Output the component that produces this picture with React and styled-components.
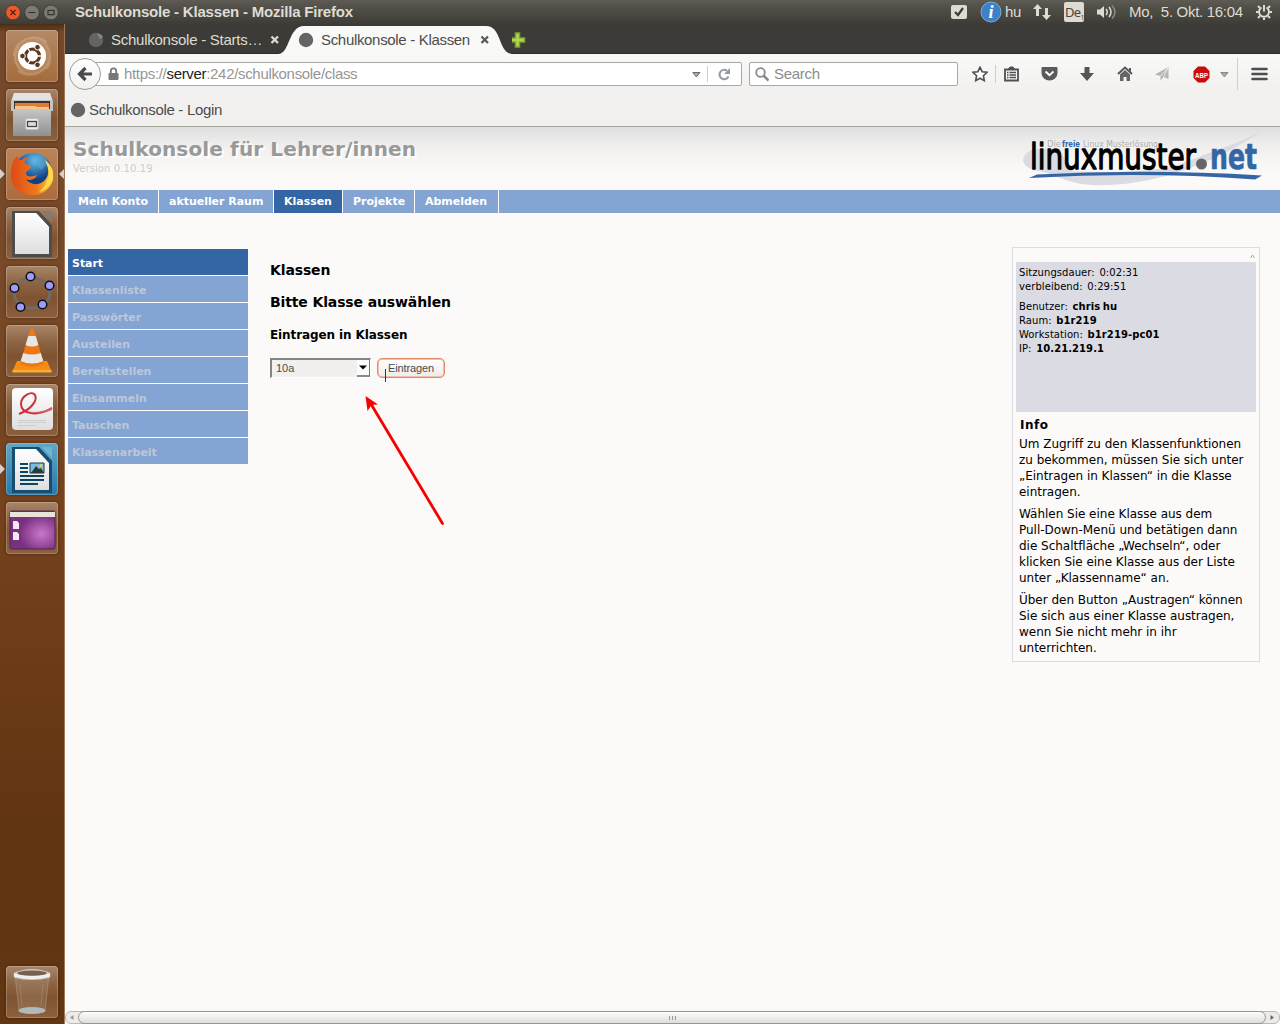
import React from 'react';
import styled, { createGlobalStyle, css } from 'styled-components';

const Global = createGlobalStyle`
  * { box-sizing: border-box; }
  html, body { margin: 0; padding: 0; overflow: hidden; }
  body { font-family: "Liberation Sans", Arial, sans-serif; }
  svg { display: block; flex: none; }
`;

const Desktop = styled.div`
  width: 1280px;
  height: 1024px;
  display: grid;
  grid-template: 24px 1000px / 65px 1215px;
  background: #fbfaf9;
  overflow: hidden;
`;

/* ---------- top panel ---------- */
const Panel = styled.header`
  grid-column: 1 / 3;
  display: flex;
  align-items: center;
  background: linear-gradient(#5d5b53 0, #504f47 35%, #3d3c37 100%);
  color: #dfdbd2;
`;
const WindowButtons = styled.div`
  display: flex;
  gap: 3px;
  padding-left: 5px;
  width: 75px;
`;
const PanelTitle = styled.div`
  font: bold 15px/24px "Liberation Sans", Arial, sans-serif;
  letter-spacing: -0.2px;
  flex: 1;
  white-space: pre;
`;
const Indicators = styled.div`
  display: flex;
  align-items: center;
  height: 24px;
  width: 330px;
  font-size: 15px;
`;
const Indicator = styled.div`
  width: ${p => p.$w}px;
  display: flex;
  align-items: center;
  flex: none;
  white-space: pre;
`;
const Keyboard = styled.div`
  width: 20px;
  height: 20px;
  border-radius: 2px;
  background: #dfdbd2;
  color: #45443e;
  font: 13px/20px "Noto Sans", sans-serif;
  display: flex;
  align-items: center;
  padding-left: 1px;
  letter-spacing: -0.7px;
  sub { font-size: 7px; line-height: 8px; align-self: flex-end; }
`;
const Clock = styled.span`
  letter-spacing: -0.3px;
  position: relative;
  top: -1px;
`;

/* ---------- launcher ---------- */
const Launcher = styled.nav`
  display: flex;
  flex-direction: column;
  gap: 7px;
  padding: 6px 0 6px 0;
  background: linear-gradient(#4a2d16 0, #75482a 8px, #784a29 250px, #75421d 480px, #6d3c18 620px, #623512 800px, #633613 100%);
  border-right: 1px solid #9d785b;
`;
const LauncherItem = styled.div`
  width: 64px;
  height: 52px;
  display: grid;
  grid-template-columns: 6px 52px 6px;
  align-items: center;
  ${p => p.$last && css`margin-top: auto;`}
`;
const Tile = styled.div`
  width: 52px;
  height: 52px;
  border-radius: 4px;
  background: ${p => p.$bg || 'linear-gradient(#a98568 0, #8f6746 30%, #7f5331 60%, #8a603d 100%)'};
  box-shadow: inset 0 0 0 1px rgba(255,255,255,.22), 0 0 3px rgba(40,15,0,.55);
`;

/* ---------- browser ---------- */
const Browser = styled.main`
  display: grid;
  grid-template-rows: 30px 73px 884px 13px;
  width: 1215px;
`;
const TabStrip = styled.div`
  display: flex;
  background: #3c3b37;
  box-shadow: inset 0 -1px #2d2c28;
`;
const IdleTab = styled.div`
  width: 213px;
  padding-left: 23px;
  display: flex;
  align-items: center;
  height: 32px;
  color: #dfdbd2;
  font-size: 15px;
  white-space: pre;
`;
const ActiveTab = styled.div`
  position: relative;
  width: 234px;
  height: 30px;
  display: flex;
  align-items: center;
  padding: 2px 0 0 20px;
  color: #4c4c4c;
  font-size: 15px;
  white-space: pre;
`;
const TabShape = styled.svg`
  position: absolute;
  left: 0;
  top: 0;
`;
const TabLabel = styled.span`
  position: relative;
  display: block;
  flex: none;
  width: ${p => p.$w}px;
  margin-left: 7px;
  margin-top: -1px;
  letter-spacing: ${p => p.$ls || 0}px;
`;
const Layered = styled.span`
  position: relative;
  display: block;
`;
const NewTab = styled.div`
  height: 30px;
`;
const Chrome = styled.div`
  background: linear-gradient(#f9f9f8 0, #f2f1f0 35px, #f1f0ef 100%);
  border-bottom: 1px solid #a8a79e;
`;
const NavBar = styled.div`
  height: 40px;
  display: flex;
  align-items: center;
  padding-left: 4px;
`;
const BackButton = styled.div`
  width: 32px;
  height: 32px;
  border-radius: 50%;
  border: 1px solid #9b9b97;
  background: linear-gradient(#fff, #f2f1f0);
  display: grid;
  place-items: center;
  position: relative;
  z-index: 1;
`;
const UrlBar = styled.div`
  width: 650px;
  margin-left: -9px;
  height: 24px;
  border: 1px solid #a9a89f;
  border-radius: 0 2px 2px 0;
  background: #fff;
  display: flex;
  align-items: center;
  padding-left: 15px;
  color: #969696;
  font-size: 15px;
`;
const Url = styled.div`
  flex: 1;
  margin-left: 5px;
  letter-spacing: -0.32px;
  line-height: 22px;
  b { font-weight: normal; color: #222; }
`;
const Rule = styled.i`
  width: 1px;
  height: ${p => p.$h}px;
  background: #cfcecb;
  margin: ${p => p.$m};
`;
const SearchBox = styled.div`
  width: 209px;
  height: 24px;
  margin-left: 7px;
  border: 1px solid #a9a89f;
  border-radius: 2px;
  background: #fff;
  display: flex;
  align-items: center;
  gap: 5px;
  padding-left: 5px;
  color: #8c8c8c;
  font-size: 15px;
  line-height: 22px;
  letter-spacing: -0.3px;
`;
const Tool = styled.div`
  margin-left: ${p => p.$gap}px;
`;
const Bookmarks = styled.div`
  height: 31px;
  display: flex;
  align-items: center;
  padding-left: 5px;
  color: #4c4c4c;
  font-size: 15px;
  gap: 3px;
  letter-spacing: -0.31px;
`;

/* ---------- page ---------- */
const Page = styled.section`
  font-family: "DejaVu Sans", Verdana, sans-serif;
  background: linear-gradient(#dedede 0, #ededec 16px, #f7f6f5 34px, #fbfaf9 50px);
  padding-left: 3px;
  overflow: hidden;
`;
const PageHead = styled.div`
  height: 63px;
  display: flex;
  justify-content: space-between;
  padding: 0 17px 0 5px;
`;
const PageTitle = styled.h1`
  margin: 10px 0 0;
  font-size: 20px;
  line-height: 25px;
  letter-spacing: 0.13px;
  color: #999;
  text-shadow: 2px 2px 1px #fff;
`;
const Version = styled.div`
  font-size: 10px;
  line-height: 14px;
  letter-spacing: 0.1px;
  color: #ccc;
`;
const MainNav = styled.div`
  display: flex;
  height: 23px;
  background: #84a5d3;
`;
const NavItem = styled.a`
  padding: 1px 0 0 10px;
  width: ${p => p.$w}px;
  border-right: 1px solid #fff;
  background: ${p => (p.$on ? '#3465a4' : 'transparent')};
  color: #fff;
  font-weight: bold;
  font-size: 11px;
  line-height: 22px;
  letter-spacing: -0.03px;
  white-space: nowrap;
`;
const Columns = styled.div`
  display: grid;
  grid-template-columns: 180px 764px 248px;
  align-items: start;
`;
const SideMenu = styled.div`
  margin-top: 36px;
  display: grid;
  gap: 1px;
  background: #fff;
`;
const SideItem = styled.a`
  height: 26px;
  padding: 1px 0 0 4px;
  font-weight: bold;
  font-size: 11px;
  line-height: 27px;
  letter-spacing: -0.04px;
  background: ${p => (p.$on ? '#3465a4' : '#84a5d3')};
  color: ${p => (p.$on ? '#fff' : '#bcc8da')};
`;
const Content = styled.div`
  padding: 47px 0 0 22px;
  color: #000;
`;
const Heading = styled.h2`
  margin: 0 0 12px;
  font-size: 14px;
  line-height: 20px;
  letter-spacing: -0.13px;
`;
const SubHeading = styled.h3`
  margin: 0 0 12px;
  padding-top: 1px;
  font-size: 12px;
  line-height: 20px;
  letter-spacing: -0.1px;
`;
const Form = styled.div`
  display: flex;
  gap: 6px;
  padding-top: 1px;
  font-family: "Liberation Sans", Arial, sans-serif;
  font-size: 11px;
  color: #4c4c4c;
`;
const Select = styled.div`
  width: 101px;
  height: 20px;
  border: 2px solid;
  border-color: #858585 #fff #fff #858585;
  border-right-width: 1px;
  border-bottom-width: 1px;
  background: #f1f0ef;
  display: flex;
  justify-content: space-between;
  padding-left: 4px;
  line-height: 17px;
`;
const SelectArrow = styled.div`
  width: 13px;
  height: 17px;
  background: #fcfcfc;
  border-right: 1px solid #777;
  border-bottom: 2px solid #8a8a8a;
  display: grid;
  place-items: center;
`;
const Submit = styled.div`
  position: relative;
  width: 68px;
  height: 20px;
  border: 1px solid #e38a68;
  border-radius: 5px;
  background: linear-gradient(#fff, #ececeb);
  box-shadow: inset 0 0 0 1px #f3bea8;
  text-align: center;
  line-height: 18px;
  letter-spacing: -0.1px;
`;
const Caret = styled.i`
  position: absolute;
  left: 7px;
  top: 10px;
  width: 1px;
  height: 13px;
  background: #333;
`;
const Pointer = styled.svg`
  margin: 14px 0 0 90px;
`;
const InfoBox = styled.aside`
  margin-top: 34px;
  height: 415px;
  border: 1px solid #dadbe3;
  padding: 0 3px;
`;
const Collapse = styled.div`
  height: 14px;
  display: flex;
  justify-content: flex-end;
  padding: 6px 1px 0 0;
`;
const Session = styled.div`
  height: 150px;
  padding: 4px 3px;
  background: #dadbe3;
  font-size: 10px;
  line-height: 14px;
  letter-spacing: 0.07px;
  word-spacing: 1.4px;
  p { margin: 0 0 6px; white-space: pre-line; }
  b { word-spacing: -1px; }
`;
const InfoTitle = styled.div`
  font-weight: bold;
  font-size: 12px;
  line-height: 16px;
  letter-spacing: 0.5px;
  padding: 5px 0 3px 4px;
`;
const InfoText = styled.p`
  margin: 0 0 6px 3px;
  font-size: 12px;
  line-height: 16px;
  letter-spacing: -0.02px;
  white-space: pre;
`;

/* ---------- scrollbar ---------- */
const Scrollbar = styled.div`
  display: flex;
  align-items: center;
  justify-content: space-between;
  background: #ecebea;
  border: 1px solid #bab9b5;
  border-radius: 6px;
  padding: 0 4px 0 3px;
`;
const Thumb = styled.div`
  width: 1188px;
  height: 13px;
  border: 1px solid #96958f;
  border-radius: 7px;
  background: linear-gradient(#fdfdfd, #dedddb);
  display: flex;
  align-items: center;
  justify-content: center;
  gap: 2px;
  i { width: 1px; height: 4px; background: #999; }
`;

const Favicon = ({ dim }) => (
  <svg width="16" height="16"><circle cx="8" cy="8" r="7.2" fill="#646464" />{dim && <path d="M9 1.5A7 7 0 0 1 15 5L12 7Z" fill="#8a8a88" />}</svg>
);
const Cross = ({ c }) => (
  <svg width="10" height="10"><path d="M1.5 1.5L8 8M8 1.5L1.5 8" stroke={c} strokeWidth="2.3" /></svg>
);
const Down = ({ c = '#6b6b6b' }) => (
  <svg width="9" height="8"><path d="M.8 2.500H8L4.400 7z" fill="#aaa" stroke={c} /></svg>
);
const WinButton = ({ kind }) => (
  <svg width="16" height="17" viewBox="0 0 16 17">
    <circle cx="8" cy="8.5" r="7.4" fill={kind === 'close' ? '#ec5a2c' : '#7c7a72'} stroke="#373530" strokeWidth=".8" />
    {kind === 'close' && <path d="M5.5 6l5 5m0-5l-5 5" stroke="#4a2312" strokeWidth="1.3" />}
    {kind === 'min' && <path d="M4.5 8.5h7" stroke="#35342f" strokeWidth="1.2" />}
    {kind === 'max' && <path d="M5 6.3h6v4.4H5z" fill="none" stroke="#35342f" strokeWidth="1.2" />}
  </svg>
);

/* Launcher artwork, each on a 52px grid */
const Art = {
  ubuntu: (
    <g>
      <path d="M8 26C8 10 28 2 41 12M44 25c0 16-18 25-32 16M25 8c16-2 24 18 16 31M27 44C12 46 4 28 13 16" fill="none" stroke="#e0c3a4" strokeOpacity=".35" strokeWidth="2" />
      <circle cx="26" cy="26" r="18" fill="#c69c76" opacity=".45" />
      <circle cx="26" cy="26" r="14" fill="#fff" />
      <circle cx="26.500" cy="26" r="7" fill="none" stroke="#59361d" strokeWidth="3.200" />
      <path d="M26.500 26L37 26M26.500 26L21 17M26.500 26L21 35" stroke="#fff" strokeWidth="1.400" />
      <g fill="#59361d" stroke="#fff" strokeWidth="1"><circle cx="16.500" cy="26" r="2.800" /><circle cx="31.500" cy="17.200" r="2.800" /><circle cx="31.500" cy="34.800" r="2.800" /></g>
    </g>
  ),
  files: (
    <g>
      <path d="M8 4h36l3 8v10H5V12z" fill="#c4c4c3" /><path d="M8 4h36l2 7H6z" fill="#e2e2e2" />
      <path d="M8 12h36v10H8z" fill="#423127" />
      <path d="M9 14h34v8H9z" fill="#e07a35" /><path d="M9 17h20l2 1h12v4H9z" fill="#f6c58c" />
      <path d="M7 20h38v27H7z" fill="url(#steel)" />
      <rect x="19.500" y="29.500" width="13" height="11" rx="2" fill="#eee" stroke="#bbb" />
      <rect x="21.500" y="32.500" width="9" height="5" fill="#ddd" stroke="#444" strokeWidth="1.300" />
    </g>
  ),
  firefox: (
    <g>
      <circle cx="27" cy="24" r="19" fill="url(#globe)" />
      <path d="M28 8c7-3 14 2 14 8-4 1-4 6-8 5-1-4-7-4-6-13z" fill="#5ea9d8" opacity=".5" />
      <path d="M7 14c1-3 3-5 5-6 0 3 2 4 3 4 3-2 5-2 7-2-3 2-4 4-3 6 3 1 6 1 6 3-1 3-5 3-5 7 2 4 7 2 11 1-2 5-8 6-11 4 5 8 19 7 22-5 1-5 0-8-2-12 6 5 8 12 7 18-3 10-12 16-22 15C12 46 4 37 5 25c0-4 1-8 2-11z" fill="url(#fox)" />
      <path d="M39 12c8 6 10 14 6 22-2 5-7 9-12 10 5-4 8-8 8-13 1 0 1 1 1 2 2-8 0-14-3-21z" fill="#ffdb4a" />
    </g>
  ),
  office: (
    <g>
      <path d="M6 4H33L46 18V50H6z" fill="#4d4d4d" /><path d="M36 4h10v12z" fill="#847a71" />
      <path d="M9 6H30L43 20V47H9z" fill="url(#paper)" /><path d="M30 6l13 14-8-4z" fill="#fff" />
    </g>
  ),
  geogebra: (
    <g>
      <ellipse cx="26" cy="27" rx="18" ry="15" fill="none" stroke="#6f6b67" strokeWidth="3" />
      {[[24.500, 10.500], [8.500, 22], [43.500, 19.500], [14.500, 41], [36.500, 38.500]].map(([x, y]) => <circle key={x} cx={x} cy={y} r="4.300" fill="#9c9cff" stroke="#101010" strokeWidth="1.500" />)}
    </g>
  ),
  vlc: (
    <g>
      <path d="M11 36h30l4.500 10H6.500z" fill="#f68b16" /><path d="M6.500 45h39v2.500h-39z" fill="#fcac2e" />
      <path d="M24 5q2-2 4 0l10 34q-12 6-24 0z" fill="#ee7913" />
      <path d="M22.300 11h7.400l2.700 9q-6.400 3-12.800 0z" fill="#e7e7e6" /><path d="M17.300 28q8.700 3 17.400 0l2.600 8q-11.300 5-22.600 0z" fill="#e7e7e6" />
    </g>
  ),
  reader: (
    <g>
      <rect x="6" y="4" width="41" height="42" rx="4" fill="url(#paper)" />
      <path d="M13 30C24 26 32 17 29 11 26 6 15 12 15 20c0 10 16 13 31 4" fill="none" stroke="#cf2e3e" strokeWidth="2" />
      <path d="M22 27q12 3 24-4v3q-12 6-24 1z" fill="#dd5963" />
      <path d="M12 36.500h28M12 38.500h28M12 41.500h18" stroke="#ccc" strokeWidth="1" />
    </g>
  ),
  writer: (
    <g>
      <path d="M6 4H33L46 18V50H6z" fill="#164e72" /><path d="M36 4h10v12z" fill="#6fb3d4" />
      <path d="M9 6H30L43 20V47H9z" fill="url(#paper)" />
      <path d="M14 21h8M14 25h8M14 29h8M14 33h24M14 37h24M14 41h18" stroke="#0b4562" strokeWidth="2" />
      <path d="M24 20h14v10H24z" fill="#7cbce0" stroke="#183949" /><path d="M25 30l5-7 3 3 2-1 3 5z" fill="#293c3a" /><circle cx="35" cy="22.500" r="1.500" fill="#f6c74d" />
    </g>
  ),
  desktop: (
    <g>
      <rect x="4" y="9" width="45" height="38" rx="2" fill="url(#purple)" stroke="#502455" />
      <path d="M4 10h45v5H4z" fill="#e9e4d9" />
      <path d="M7 19h4l2 2v6H7zM7 30h4l2 2v6H7z" fill="#f3e9f4" />
    </g>
  ),
  trash: (
    <g>
      <path d="M9 9l4 36q13 5 26 0l4-36z" fill="#ddd4cc" fillOpacity=".14" stroke="#c9b9aa" strokeOpacity=".35" />
      <path d="M7.500 7q18.500-8 37 0l-1 5q-17.500 4-35 0z" fill="#c9c9c6" />
      <path d="M8 9q18 5 36 0" fill="none" stroke="#f0f0ee" strokeWidth="3" />
      <ellipse cx="26" cy="7.200" rx="14.500" ry="2.600" fill="#77604e" />
      <ellipse cx="26" cy="44.500" rx="13.500" ry="3.500" fill="#b3b8b8" />
      <path d="M14 18l2 22M37 18l-2 22" stroke="#eee" strokeOpacity=".15" />
    </g>
  ),
};

const LAUNCHER = [
  { id: 'ubuntu', bg: 'linear-gradient(#b38a67,#a56c3d)' },
  { id: 'files' },
  { id: 'firefox', left: true, right: true, bg: 'linear-gradient(#bd8357,#ad6b3c)' },
  { id: 'office' },
  { id: 'geogebra' },
  { id: 'vlc' },
  { id: 'reader' },
  { id: 'writer', left: true, bg: 'linear-gradient(#62a5c6,#267baa)' },
  { id: 'desktop' },
  { id: 'trash', last: true },
];

const HiddenDefs = styled.div`
  height: 0;
  overflow: hidden;
  position: absolute;
`;
const Defs = () => (
  <HiddenDefs>
    <svg width="0" height="0">
      <defs>
        <linearGradient id="steel" x2="0" y2="1"><stop stopColor="#c6c6c6" /><stop offset="1" stopColor="#909090" /></linearGradient>
        <linearGradient id="paper" x2="0" y2="1"><stop stopColor="#fff" /><stop offset="1" stopColor="#dedede" /></linearGradient>
        <radialGradient id="globe" cx=".55" cy=".2"><stop stopColor="#62c2eb" /><stop offset="1" stopColor="#143f82" /></radialGradient>
        <linearGradient id="fox"><stop stopColor="#dd4a18" /><stop offset=".6" stopColor="#ef781b" /><stop offset="1" stopColor="#ffd43b" /></linearGradient>
        <radialGradient id="purple" cx=".7" cy=".6"><stop stopColor="#ca78cb" /><stop offset="1" stopColor="#79307f" /></radialGradient>
      </defs>
    </svg>
  </HiddenDefs>
);

const LogoArt = styled.svg`
  overflow: visible;
`;
const Logo = () => (
  <LogoArt width="242" height="60" viewBox="1021 127 242 60">
    <path d="M1034 149C1020 154 1018 167 1038 171C1054 173 1063 183 1092 185C1135 187 1200 174 1263 130C1238 144 1205 154 1180 164C1160 171 1120 174 1070 171L1060 149Z" fill="#dadbe3" />
    <g fontFamily="DejaVu Sans" fontSize="8">
      <text x="1047" y="147" textLength="14" lengthAdjust="spacingAndGlyphs" fill="#b0b0b0">Die</text>
      <text x="1062" y="147" textLength="18" lengthAdjust="spacingAndGlyphs" fontWeight="bold" fill="#3465a4">freie</text>
      <text x="1083" y="147" textLength="75" lengthAdjust="spacingAndGlyphs" fill="#b0b0b0">Linux Musterlösung</text>
    </g>
    <text x="1030" y="168.700" textLength="166" lengthAdjust="spacingAndGlyphs" fontFamily="DejaVu Sans" fontSize="35" fill="#000" stroke="#000" strokeWidth="1.300" strokeLinejoin="round">linuxmuster</text>
    <circle cx="1201.500" cy="164" r="5.500" fill="#666" />
    <text x="1210" y="168.700" textLength="47" lengthAdjust="spacingAndGlyphs" fontFamily="DejaVu Sans" fontWeight="bold" fontSize="35" fill="#3465a4" stroke="#3465a4" strokeWidth=".7" strokeLinejoin="round">net</text>
    <path d="M1029 178l8-3.500q110-6 225 1l-7 4q-110-8-226-1.500z" fill="#3465a4" />
  </LogoArt>
);

const NAV = [['Mein Konto', 91], ['aktueller Raum', 115], ['Klassen', 69], ['Projekte', 72], ['Abmelden', 84]];
const SIDE = ['Start', 'Klassenliste', 'Passwörter', 'Austeilen', 'Bereitstellen', 'Einsammeln', 'Tauschen', 'Klassenarbeit'];

export default function App() {
  return (
    <Desktop>
      <Global />
      <Defs />
      <Panel>
        <WindowButtons><WinButton kind="close" /><WinButton kind="min" /><WinButton kind="max" /></WindowButtons>
        <PanelTitle>Schulkonsole - Klassen - Mozilla Firefox</PanelTitle>
        <Indicators>
          <Indicator $w={30}><svg width="17" height="16"><rect x="1" y="1" width="16" height="14" rx="2" fill="#dfdbd2" /><path d="M5 8l3 3 5-7" fill="none" stroke="#3d3c37" strokeWidth="2.200" /></svg></Indicator>
          <Indicator $w={25}>
            <svg width="22" height="22" viewBox="0 0 22 22"><circle cx="11" cy="11" r="10" fill="#3f82c4" stroke="#75afe0" /><text x="8.500" y="17" fontFamily="Liberation Serif" fontSize="18" fontStyle="italic" fontWeight="bold" fill="#fff">i</text></svg>
          </Indicator>
          <Indicator $w={28}><Clock>hu</Clock></Indicator>
          <Indicator $w={31}><svg width="18" height="18"><path d="M0 6l4.500-5L9 6H6v7H3V6zM9 12h3V5h3v7h3l-4.500 5z" fill="#dfdbd2" /></svg></Indicator>
          <Indicator $w={33}><Keyboard>De<sub>1</sub></Keyboard></Indicator>
          <Indicator $w={32}>
            <svg width="20" height="16" fill="none" stroke="#dfdbd2" strokeWidth="1.500"><path d="M0 5.500h3l4-3.500v12l-4-3.500H0z" fill="#dfdbd2" stroke="none" /><path d="M9 5q2.500 3 0 6M12 3q4 5 0 10" /><path d="M15 1.500q6 6.500 0 13" stroke="#8b8981" /></svg>
          </Indicator>
          <Indicator $w={126}><Clock>Mo,  5. Okt. 16:04</Clock></Indicator>
          <Indicator $w={20}>
            <svg width="18" height="18" viewBox="0 0 18 18" fill="none" stroke="#dfdbd2"><path d="M6.500 4.500a5 5 0 1 0 5 0" strokeWidth="2" /><path d="M9 2v6.500" strokeWidth="2" /><path d="M3 3l2 2M15 3l-2 2M1 9h2.500M14.500 9H17M3 15l2-2M15 15l-2-2M9 14.500V17" strokeWidth="2" /></svg>
          </Indicator>
        </Indicators>
      </Panel>

      <Launcher>
        {LAUNCHER.map(it => (
          <LauncherItem key={it.id} $last={it.last}>
            <svg width="6" height="10">{it.left && <path d="M0 0l5 5-5 5z" fill="#d9cfc6" />}</svg>
            <Tile $bg={it.bg}><svg width="52" height="52" viewBox="0 0 52 52">{Art[it.id]}</svg></Tile>
            <svg width="6" height="10">{it.right && <path d="M6 0L1 5l5 5z" fill="#d9cfc6" />}</svg>
          </LauncherItem>
        ))}
      </Launcher>

      <Browser>
        <TabStrip>
          <IdleTab><Favicon dim /><TabLabel $w={159} $ls={-0.25}>Schulkonsole - Starts…</TabLabel><Cross c="#dfdbd2" /></IdleTab>
          <ActiveTab>
            <TabShape width="238" height="30"><path d="M0 30C12 30 10 2 26 2H208C224 2 220 29 234 30Z" fill="#f9f9f8" /></TabShape>
            <Layered><Favicon /></Layered>
            <TabLabel $w={159} $ls={-0.32}>Schulkonsole - Klassen</TabLabel>
            <Layered><Cross c="#5a5a58" /></Layered>
          </ActiveTab>
          <NewTab><svg width="18" height="32"><path d="M5 9h4v5h5v4H9v5H5v-5H0v-4h5z" fill="#b5d64d" stroke="#7da336" strokeWidth="1.500" transform="translate(-1.500 0)" /></svg></NewTab>
        </TabStrip>

        <Chrome>
          <NavBar>
            <BackButton><svg width="16" height="16"><path d="M8.500 2L2.500 8l6 6M3 8h12" fill="none" stroke="#4a4a4a" strokeWidth="3.200" /></svg></BackButton>
            <UrlBar>
              <svg width="11" height="14"><path d="M2.800 7V4a2.700 2.700 0 0 1 5.400 0v3" fill="none" stroke="#777" strokeWidth="1.800" /><rect x=".5" y="6" width="10" height="7" rx="1" fill="#777" /></svg>
              <Url>https://<b>server</b>:242/schulkonsole/class</Url>
              <Down />
              <Rule $h={16} $m="0 10px 0 6px" />
              <svg width="13" height="13"><path d="M10.500 8.500A4.700 4.700 0 1 1 9 2.700" fill="none" stroke="#9099a1" strokeWidth="2" /><path d="M12 0v6H6z" fill="#9099a1" /></svg>
              <Rule $h={0} $m="0 5px 0 4px" />
            </UrlBar>
            <SearchBox>
              <svg width="14" height="15"><circle cx="5.500" cy="5.500" r="4.300" fill="none" stroke="#8b8b8b" strokeWidth="1.800" /><path d="M8.500 8.500l5 5" stroke="#8b8b8b" strokeWidth="2.500" /></svg>
              <span>Search</span>
            </SearchBox>
            <Tool $gap={14}><svg width="16" height="16"><path d="M8 1.200l2.100 4.500 4.900.6-3.600 3.400.9 4.900L8 12.200l-4.300 2.400.9-4.900L1 6.300l4.900-.6z" fill="#fff" stroke="#505050" strokeWidth="1.600" /></svg></Tool>
            <Rule $h={18} $m="0 0 0 7px" />
            <Tool $gap={8}><svg width="15" height="16"><path d="M1 3.500h13v11H1z" fill="#f7f7f6" stroke="#505050" strokeWidth="1.800" /><path d="M4.500 3l1.500-2h3l1.500 2z" stroke="#505050" fill="#505050" /><path d="M3 6.500h1.500m1 0H12M3 9h1.500m1 0H12M3 11.500h1.500m1 0H12" stroke="#505050" strokeWidth="1.300" /></svg></Tool>
            <Tool $gap={22}><svg width="17" height="16"><path d="M1.500 1h14q1 0 1 1v5a8 7.500 0 0 1-16 0V2q0-1 1-1z" fill="#5a5a5a" /><path d="M4.500 5.500l4 3.700 4-3.700" fill="none" stroke="#fff" strokeWidth="2" /></svg></Tool>
            <Tool $gap={22}><svg width="14" height="16"><path d="M4.500 1h5v6H14l-7 8-7-8h4.500z" fill="#555" /></svg></Tool>
            <Tool $gap={23}><svg width="16" height="16"><path d="M1 8l7-6.500L15 8" fill="none" stroke="#555" strokeWidth="2" /><path d="M3 8.500l5-4.500 5 4.500V15H9.500v-4h-3v4H3z" fill="#666" /><path d="M12 2h2v4l-2-2z" fill="#555" /></svg></Tool>
            <Tool $gap={22}><svg width="14" height="16"><path d="M13.500 1v12L8.500 11l-3 3.500V10L0 8.500z" fill="#b5b5b4" /><path d="M13 2L5.500 10M13 2L8.500 11" stroke="#f6f6f5" strokeWidth=".8" /></svg></Tool>
            <Tool $gap={24}><svg width="17" height="17"><path d="M5 .5h7L16.500 5v7L12 16.500H5L.5 12V5z" fill="#c70d0d" /><text x="2" y="11.500" fontFamily="Liberation Sans" fontWeight="bold" fontSize="8" textLength="13" lengthAdjust="spacingAndGlyphs" fill="#fff">ABP</text></svg></Tool>
            <Tool $gap={10}><Down c="#888" /></Tool>
            <Rule $h={32} $m="0 0 0 8px" />
            <Tool $gap={13}><svg width="17" height="14"><path d="M1.500 2h14M1.500 7h14M1.500 12h14" stroke="#4d4d4d" strokeWidth="2.600" strokeLinecap="round" /></svg></Tool>
          </NavBar>
          <Bookmarks><Favicon /><span>Schulkonsole - Login</span></Bookmarks>
        </Chrome>

        <Page>
          <PageHead>
            <div>
              <PageTitle>Schulkonsole für Lehrer/innen</PageTitle>
              <Version>Version 0.10.19</Version>
            </div>
            <Logo />
          </PageHead>
          <MainNav>{NAV.map(([t, w]) => <NavItem key={t} $w={w} $on={t === 'Klassen'}>{t}</NavItem>)}</MainNav>
          <Columns>
            <SideMenu>{SIDE.map((t, i) => <SideItem key={t} $on={i === 0}>{t}</SideItem>)}</SideMenu>
            <Content>
              <Heading>Klassen</Heading>
              <Heading>Bitte Klasse auswählen</Heading>
              <SubHeading>Eintragen in Klassen</SubHeading>
              <Form>
                <Select>10a<SelectArrow><svg width="8" height="5"><path d="M0 .5h8L4 4.500z" /></svg></SelectArrow></Select>
                <Submit>Eintragen<Caret /></Submit>
              </Form>
              <Pointer width="90" height="140" viewBox="360 392 90 140"><path d="M442.500 523.500L371 404" stroke="#f70000" strokeWidth="2.800" strokeLinecap="round" /><path d="M365.500 396l12.500 8.500-6.500.5-4 6z" fill="#f70000" /></Pointer>
            </Content>
            <InfoBox>
              <Collapse><svg width="5" height="5"><path d="M.5 4l2-3 2 3" fill="none" stroke="#aaa" /></svg></Collapse>
              <Session>
                <p>Sitzungsdauer: 0:02:31{'\n'}verbleibend: 0:29:51</p>
                <p>Benutzer: <b>chris hu</b>{'\n'}Raum: <b>b1r219</b>{'\n'}Workstation: <b>b1r219-pc01</b>{'\n'}IP: <b>10.21.219.1</b></p>
              </Session>
              <InfoTitle>Info</InfoTitle>
              <InfoText>{'Um Zugriff zu den Klassenfunktionen\nzu bekommen, müssen Sie sich unter\n„Eintragen in Klassen“ in die Klasse\neintragen.'}</InfoText>
              <InfoText>{'Wählen Sie eine Klasse aus dem\nPull-Down-Menü und betätigen dann\ndie Schaltfläche „Wechseln“, oder\nklicken Sie eine Klasse aus der Liste\nunter „Klassenname“ an.'}</InfoText>
              <InfoText>{'Über den Button „Austragen“ können\nSie sich aus einer Klasse austragen,\nwenn Sie nicht mehr in ihr\nunterrichten.'}</InfoText>
            </InfoBox>
          </Columns>
        </Page>

        <Scrollbar>
          <svg width="5" height="7"><path d="M4.500 1v5L1 3.500z" fill="#999" /></svg>
          <Thumb><i /><i /><i /></Thumb>
          <svg width="5" height="7"><path d="M.5 1v5L4 3.500z" fill="#666" /></svg>
        </Scrollbar>
      </Browser>
    </Desktop>
  );
}
